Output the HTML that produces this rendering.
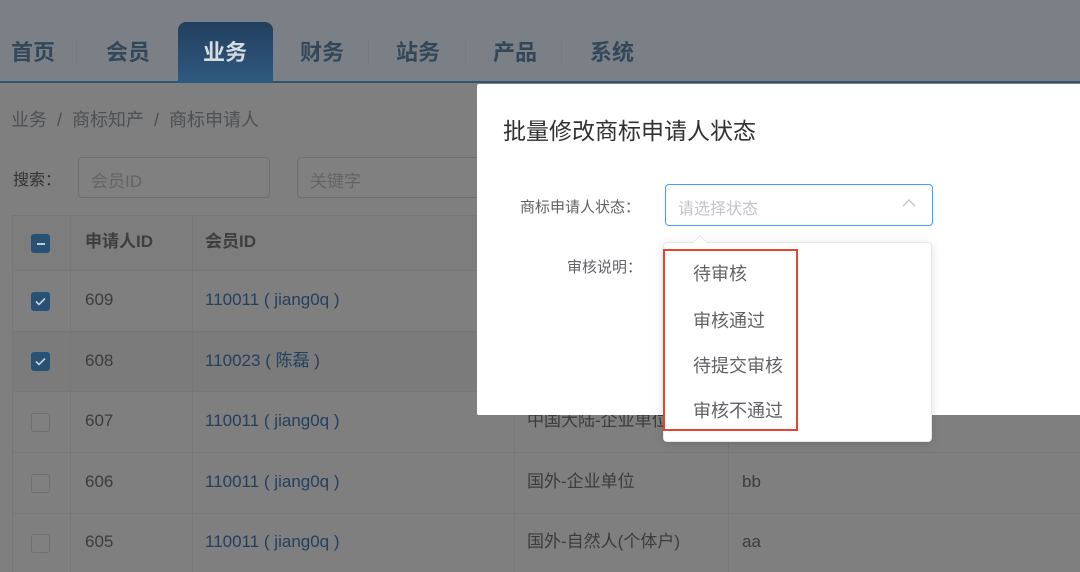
<!DOCTYPE html>
<html><head><meta charset="utf-8"><style>
*{margin:0;padding:0;box-sizing:border-box}
body{width:1080px;height:572px;overflow:hidden;background:#7f7f7f;font-family:"Liberation Sans","Noto Sans CJK SC",sans-serif;position:relative}
.abs{position:absolute;white-space:nowrap}
.nav{position:absolute;left:0;top:0;width:1080px;height:83px;background:#7a8086;border-bottom:2px solid #2b5678}
.tab{position:absolute;top:36px;font-size:22px;font-weight:bold;color:#34475a;line-height:34px}
.sep{position:absolute;top:40px;width:1px;height:26px;background:#727a82}
.act{position:absolute;left:178px;top:22px;width:95px;height:61px;border-radius:8px 8px 0 0;background:linear-gradient(#223f5e,#2f5a80)}
.inp{position:absolute;top:157px;height:41px;border:1px solid #6e6e6e;border-radius:4px;font-size:17px;color:#646464;padding:9px 12px;background:#808080}
.row{position:absolute;left:12px;width:1068px;border-top:1px solid #777;}
.vl{position:absolute;top:215px;width:1px;height:357px;background:#777}
.cb{position:absolute;left:31px;width:19px;height:19px;border-radius:3px;border:1px solid #6f6f6f;background:#808080}
.cb.on{background:#275175;border-color:#275175}
.td{position:absolute;font-size:17px;color:#3c3c3c;line-height:20px}
.lk{color:#23405f}
.modal{position:absolute;left:477px;top:84px;width:610px;height:331px;background:#fff;border-radius:2px}
.dd{position:absolute;left:663px;top:242px;width:269px;height:200px;background:#fff;border:1px solid #e4e7ed;border-radius:4px;box-shadow:0 2px 10px rgba(0,0,0,.12)}
.it{position:absolute;left:693px;font-size:18px;color:#606266;line-height:24px}
</style></head><body>
<div class="nav"></div>
<div class="act"></div>
<div class="tab" style="left:11px">首页</div>
<div class="sep" style="left:76px"></div>
<div class="tab" style="left:106px">会员</div>
<div class="tab" style="left:203px;color:#d6dbe0">业务</div>
<div class="tab" style="left:300px">财务</div>
<div class="sep" style="left:368px"></div>
<div class="tab" style="left:396px">站务</div>
<div class="sep" style="left:465px"></div>
<div class="tab" style="left:493px">产品</div>
<div class="sep" style="left:561px"></div>
<div class="tab" style="left:590px">系统</div>

<div class="abs" style="left:11px;top:106px;font-size:18px;color:#4d5054">业务 &nbsp;/ &nbsp;商标知产 &nbsp;/ &nbsp;商标申请人</div>
<div class="abs" style="left:13px;top:166px;font-size:16px;color:#333">搜索：</div>
<div class="inp" style="left:78px;width:192px">会员ID</div>
<div class="inp" style="left:297px;width:200px">关键字</div>

<div style="position:absolute;left:12px;top:215px;width:1068px;height:55px;background:#7d7d7d"></div>
<div style="position:absolute;left:12px;top:331px;width:1068px;height:60px;background:#7b7b7b"></div>
<div class="row" style="top:215px"></div>
<div class="row" style="top:270px"></div>
<div class="row" style="top:331px"></div>
<div class="row" style="top:391px"></div>
<div class="row" style="top:452px"></div>
<div class="row" style="top:513px"></div>
<div class="vl" style="left:12px"></div>
<div class="vl" style="left:70px"></div>
<div class="vl" style="left:192px"></div>
<div class="vl" style="left:514px"></div>
<div class="vl" style="left:728px"></div>

<div class="cb on" style="top:234px"><div style="position:absolute;left:5px;top:8px;width:8px;height:2px;background:#bcc"></div></div>
<div class="td" style="left:85px;top:232px;font-weight:bold;color:#3e3e3e">申请人ID</div>
<div class="td" style="left:205px;top:232px;font-weight:bold;color:#3e3e3e">会员ID</div>

<div class="cb on" style="top:292px"><svg width="17" height="17" viewBox="0 0 17 17"><path d="M4 8.5l3 3 6-6" stroke="#c8cfd6" stroke-width="1.6" fill="none"/></svg></div>
<div class="td" style="left:85px;top:290px">609</div>
<div class="td lk" style="left:205px;top:290px">110011 ( jiang0q )</div>
<div class="cb on" style="top:352px"><svg width="17" height="17" viewBox="0 0 17 17"><path d="M4 8.5l3 3 6-6" stroke="#c8cfd6" stroke-width="1.6" fill="none"/></svg></div>
<div class="td" style="left:85px;top:351px">608</div>
<div class="td lk" style="left:205px;top:351px">110023 ( 陈磊 )</div>
<div class="cb" style="top:413px"></div>
<div class="td" style="left:85px;top:411px">607</div>
<div class="td lk" style="left:205px;top:411px">110011 ( jiang0q )</div>
<div class="td" style="left:527px;top:411px">中国大陆-企业单位</div>
<div class="cb" style="top:474px"></div>
<div class="td" style="left:85px;top:472px">606</div>
<div class="td lk" style="left:205px;top:472px">110011 ( jiang0q )</div>
<div class="td" style="left:527px;top:472px">国外-企业单位</div>
<div class="td" style="left:742px;top:472px">bb</div>
<div class="cb" style="top:534px"></div>
<div class="td" style="left:85px;top:532px">605</div>
<div class="td lk" style="left:205px;top:532px">110011 ( jiang0q )</div>
<div class="td" style="left:527px;top:532px">国外-自然人(个体户)</div>
<div class="td" style="left:742px;top:532px">aa</div>

<div class="modal"></div>
<div class="abs" style="left:503px;top:112px;font-size:23px;color:#303133">批量修改商标申请人状态</div>
<div class="abs" style="left:520px;top:196px;font-size:15px;color:#606266">商标申请人状态：</div>
<div style="position:absolute;left:665px;top:184px;width:268px;height:42px;border:1px solid #409eff;border-radius:4px"></div>
<div class="abs" style="left:678px;top:195px;font-size:16px;color:#c0c4cc">请选择状态</div>
<svg style="position:absolute;left:902px;top:198px" width="14" height="10" viewBox="0 0 14 10"><path d="M1 8l6-6 6 6" stroke="#c0c4cc" stroke-width="1.3" fill="none"/></svg>
<div class="abs" style="left:567px;top:256px;font-size:15px;color:#606266">审核说明：</div>
<div class="dd"></div>
<div style="position:absolute;left:695px;top:237px;width:10px;height:10px;background:#fff;transform:rotate(45deg);border-left:1px solid #e4e7ed;border-top:1px solid #e4e7ed"></div>
<div class="it" style="top:262px">待审核</div>
<div class="it" style="top:309px">审核通过</div>
<div class="it" style="top:354px">待提交审核</div>
<div class="it" style="top:399px">审核不通过</div>
<div style="position:absolute;left:663px;top:249px;width:135px;height:182px;border:2.5px solid #e2472e"></div>
</body></html>
